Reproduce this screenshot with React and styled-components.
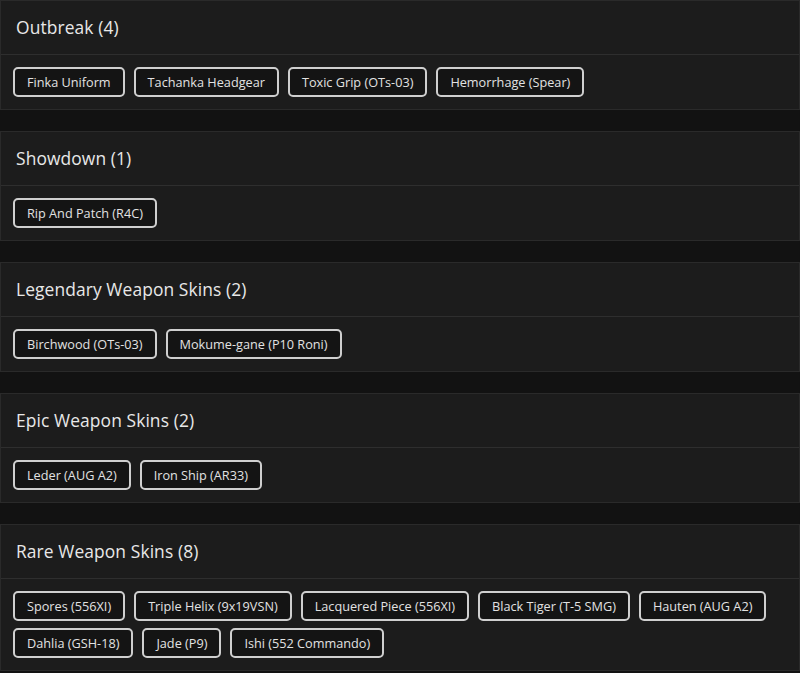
import React from "react";
import styled, { createGlobalStyle } from "styled-components";

const sections = [
    { title: "Outbreak", items: ["Finka Uniform", "Tachanka Headgear", "Toxic Grip (OTs-03)", "Hemorrhage (Spear)"] },
    { title: "Showdown", items: ["Rip And Patch (R4C)"] },
    { title: "Legendary Weapon Skins", items: ["Birchwood (OTs-03)", "Mokume-gane (P10 Roni)"] },
    { title: "Epic Weapon Skins", items: ["Leder (AUG A2)", "Iron Ship (AR33)"] },
    {
        title: "Rare Weapon Skins",
        items: [
            "Spores (556XI)",
            "Triple Helix (9x19VSN)",
            "Lacquered Piece (556XI)",
            "Black Tiger (T-5 SMG)",
            "Hauten (AUG A2)",
            "Dahlia (GSH-18)",
            "Jade (P9)",
            "Ishi (552 Commando)"
        ]
    }
];

const GlobalStyle = createGlobalStyle`
    body {
        margin: 0;
        background: #121212;
        font-family: "Open Sans", "Liberation Sans", sans-serif;
        color: #e6e6e6;
    }
`

const Page = styled.div`
    display: flex;
    flex-direction: column;
    gap: 21px;
`

const Card = styled.section`
    background: #1c1c1c;
    border: 1px solid #2a2a2a;
`

const Header = styled.div`
    height: 54px;
    box-sizing: border-box;
    display: flex;
    align-items: center;
    padding: 0 15px 1px;
    border-bottom: 1px solid #2e2e2e;
`

const Title = styled.h2`
    margin: 0;
    font-size: 17.4px;
    font-weight: 500;
    color: #e8e8e8;
    letter-spacing: 0.1px;
`

const Body = styled.div`
    display: flex;
    flex-wrap: wrap;
    gap: 7px 9px;
    padding: 12px;
`

const Chip = styled.span`
    height: 30px;
    box-sizing: border-box;
    display: inline-flex;
    align-items: center;
    padding: 0 12px;
    border: 2px solid #cfcfcf;
    border-radius: 5px;
    background: #141414;
    font-size: 12.7px;
    font-weight: 500;
    color: #e2e2e2;
    white-space: nowrap;
`

function App() {
    return (
        <>
            <GlobalStyle />
            <Page>
                {sections.map((section) => (
                    <Card key={section.title}>
                        <Header>
                            <Title>{section.title} ({section.items.length})</Title>
                        </Header>
                        <Body>
                            {section.items.map((item) => (
                                <Chip key={item}>{item}</Chip>
                            ))}
                        </Body>
                    </Card>
                ))}
            </Page>
        </>
    );
}

export default App;
